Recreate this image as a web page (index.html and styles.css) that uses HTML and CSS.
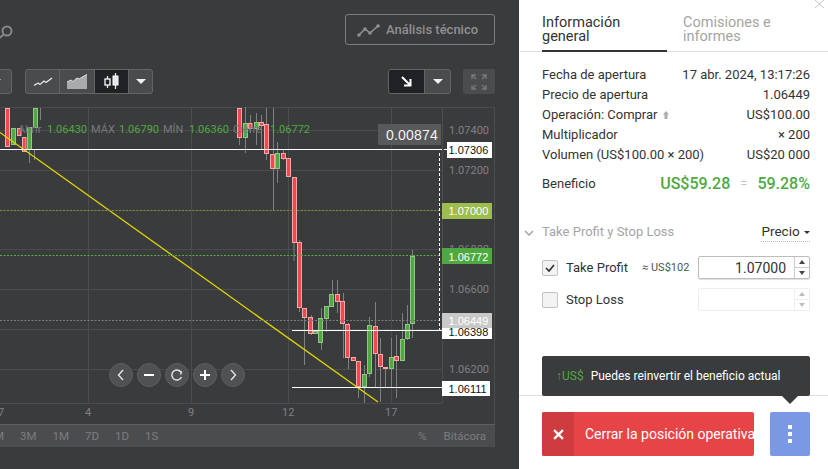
FILE: index.html
```html
<!DOCTYPE html>
<html lang="es">
<head>
<meta charset="utf-8">
<title>Posición operativa</title>
<link rel="stylesheet" href="styles.css">
</head>
<body>
<main class="terminal">
  <section class="chart-area">
    <header class="top-bar">
      <svg class="search-icon" viewBox="0 0 16 14" width="16" height="14"><circle cx="8" cy="6" r="4.5"/><path d="M4.8 9.2 0.5 13"/></svg>
      <button class="analysis-btn">
        <svg viewBox="0 0 24 14" width="24" height="14"><path d="M2 12 8 6 13 10 22 2"/><circle cx="2" cy="12" r="1.8"/><circle cx="8" cy="6" r="1.8"/><circle cx="13" cy="10" r="1.8"/><circle cx="21" cy="3" r="1.8"/></svg>
        <span>Análisis técnico</span>
      </button>
    </header>
    <div class="tool-bar">
      <div class="seg seg-cut"><span class="caret-cell"><i class="caret"></i></span></div>
      <div class="seg seg-types">
        <span class="cell c34"><svg viewBox="0 0 20 10" width="20" height="10"><path class="ic-line" d="M1 8.5 5 6 7 7.5 11 4 13 5.5 19 1"/></svg></span>
        <span class="cell c35"><svg viewBox="0 0 20 15" width="20" height="15"><path class="ic-area" d="M0 15V8L4 6 6 7.500 10 4 12 5 18 1 20 .5V15Z"/><path class="ic-areatop" d="M0 8 4 6 6 7.500 10 4 12 5 20 .5"/></svg></span>
        <span class="cell c33 on"><svg viewBox="0 0 16 18" width="16" height="18"><path class="ic-line" d="M3.500 3V15M11.500 0V16"/><rect class="ic-hollow" x="1" y="6" width="5" height="6"/><rect class="ic-solid" x="9" y="3" width="5" height="9"/></svg></span>
        <span class="caret-cell c26"><i class="caret"></i></span>
      </div>
      <div class="seg seg-trend">
        <span class="cell c36 on"><svg viewBox="0 0 12 12" width="12" height="12"><path class="ic-arrow" d="M1 1 9 9M3 9.500H9.500V3"/></svg></span>
        <span class="caret-cell c26"><i class="caret"></i></span>
      </div>
      <span class="expand-btn"><svg viewBox="0 0 16 16" width="16" height="16"><path d="M1 5V1H5M11 1H15V5M15 11V15H11M5 15H1V11M1 1 5 5M15 1 11 5M15 15 11 11M1 15 5 11"/></svg></span>
    </div>
    <svg class="plot" viewBox="0 107 519 317" width="519" height="317">
      <g class="grid">
        <path d="M0 107.500H495M0 130.500H442M0 170.500H442M0 210.500H442M0 249.500H442M0 289.500H442M0 329.500H442M0 369.500H442M0 403.500H442"/>
        <path d="M88.500 107V403M191.500 107V403M288.500 107V403M391.500 107V403M442.500 107V403M494.500 107V424"/>
      </g>
      <g class="wicks">
        <path d="M40.500 108V120M29.500 150V163M34.500 150V160M239.500 108V145M245.500 107V153M250.500 115V133M256.500 113V145M261.500 115V150M266.500 108V160M273.500 108V211M277.500 142V183M283.500 150V160M294 177V261M299.500 240V312M304.500 318V365M311.500 315V335M321.500 308V350M326.500 308V332M332.500 280V307M337.500 280V313M343.500 293V358M348.500 323V369M358.500 361V398M364.500 365V403M369.500 317V377M375.500 302V387M380.500 338V402M385.500 367V387M391.500 338V387M396.500 335V398M402.500 313V361M407.500 305V340M412.500 250V338"/>
      </g>
      <g class="dn">
        <rect x="5.500" y="108.500" width="4" height="38"/>
        <rect x="17.500" y="128.500" width="3.500" height="7"/>
        <rect x="22.500" y="137.500" width="3.500" height="14"/>
        <rect x="237.500" y="108.500" width="4" height="29"/>
        <rect x="248.500" y="123.500" width="3.500" height="5"/>
        <rect x="259.500" y="122.500" width="4" height="3"/>
        <rect x="264.500" y="124.500" width="4" height="29"/>
        <rect x="270.500" y="154.500" width="4" height="14"/>
        <rect x="281.500" y="153.500" width="4" height="5"/>
        <rect x="286.500" y="158.500" width="4" height="18"/>
        <rect x="292.500" y="177.500" width="4" height="65"/>
        <rect x="297.500" y="242.500" width="4" height="65"/>
        <rect x="302.500" y="308.500" width="4" height="9"/>
        <rect x="308.500" y="317.500" width="4" height="16"/>
        <rect x="335.500" y="294.500" width="4" height="7"/>
        <rect x="340.500" y="301.500" width="4" height="22"/>
        <rect x="345.500" y="324.500" width="4" height="33"/>
        <rect x="351.500" y="357.500" width="4" height="3"/>
        <rect x="356.500" y="361.500" width="4" height="25"/>
        <rect x="373.500" y="326.500" width="4" height="27"/>
        <rect x="378.500" y="354.500" width="4" height="12"/>
        <rect x="383.500" y="367.500" width="4" height="1"/>
        <rect x="394.500" y="356.500" width="4" height="4"/>
      </g>
      <g class="up">
        <rect x="11.500" y="128.500" width="4" height="16"/>
        <rect x="27.500" y="127.500" width="4" height="22"/>
        <rect x="33.500" y="108.500" width="4" height="19"/>
        <rect x="243.500" y="123.500" width="4" height="14"/>
        <rect x="254.500" y="122.500" width="4" height="6"/>
        <rect x="275.500" y="153.500" width="4" height="15"/>
        <rect x="313.500" y="331.500" width="4" height="2"/>
        <rect x="318.500" y="318.500" width="4" height="24"/>
        <rect x="324.500" y="306.500" width="4" height="12"/>
        <rect x="329.500" y="294.500" width="4" height="12"/>
        <rect x="362.500" y="374.500" width="4" height="12"/>
        <rect x="367.500" y="325.500" width="4" height="48"/>
        <rect x="389.500" y="357.500" width="4" height="11"/>
        <rect x="400.500" y="339.500" width="4" height="21"/>
        <rect x="405.500" y="324.500" width="4" height="14"/>
        <rect x="410.500" y="256.500" width="4" height="67"/>
      </g>
      <path class="trend" d="M0 132.500 378 402"/>
      <path class="dot-olive" d="M0 210.500H439"/>
      <path class="dot-green" d="M0 255.500H439"/>
      <path class="dot-grey" d="M0 320.500H439"/>
      <path class="dash-white" d="M439.500 153V330"/>
      <path class="solid-white" d="M0 149.500H442M292 330.500H442M292 387.500H442M444 149.500H447M444 210.500H447M444 255.500H447M444 387.500H447"/>
      <text class="ohlc" y="133"><tspan class="lbl" x="18">Abrir</tspan><tspan class="val" x="47">1.06430</tspan><tspan class="lbl" x="91">MÁX</tspan><tspan class="val" x="119">1.06790</tspan><tspan class="lbl" x="163">MÍN</tspan><tspan class="val" x="189">1.06360</tspan><tspan class="lbl" x="233">Cierre</tspan><tspan class="val" x="270">1.06772</tspan></text>
      <text class="axis" x="449" y="134">1.07400</text>
      <text class="axis" x="449" y="174">1.07200</text>
      <text class="axis" x="449" y="253">1.06800</text>
      <text class="axis" x="449" y="293">1.06600</text>
      <text class="axis" x="449" y="373">1.06200</text>
      <rect class="box-delta" x="378" y="124" width="63" height="21"/>
      <text class="delta" x="386" y="140">0.00874</text>
      <rect class="box-white" x="447" y="142" width="45" height="16"/><text class="tag dark" x="448.500" y="154">1.07306</text>
      <rect class="box-lime" x="442" y="203" width="50" height="16"/><text class="tag light" x="448.500" y="215">1.07000</text>
      <rect class="box-green" x="442" y="248" width="50" height="16"/><text class="tag light" x="448.500" y="261">1.06772</text>
      <rect class="box-white" x="442" y="325" width="50" height="14"/><text class="tag dark" x="448.500" y="336">1.06398</text>
      <rect class="box-grey" x="442" y="313" width="50" height="15"/><text class="tag light" x="448.500" y="325">1.06449</text>
      <rect class="box-white" x="442" y="381" width="48" height="15"/><text class="tag dark" x="448.500" y="393">1.06111</text>
      <text class="axis" x="-2" y="416">7</text>
      <text class="axis" x="85" y="416">4</text>
      <text class="axis" x="188" y="416">9</text>
      <text class="axis" x="282" y="416">12</text>
      <text class="axis" x="385" y="416">17</text>
    </svg>
    <nav class="zoom-nav">
      <span class="round"><svg viewBox="0 0 12 12" width="12" height="12"><path d="M8 1 3.500 6 8 11"/></svg></span>
      <span class="round"><svg viewBox="0 0 12 12" width="12" height="12"><path class="thick" d="M1 6H11"/></svg></span>
      <span class="round"><svg viewBox="0 0 12 12" width="12" height="12"><path d="M10 3.200A5 5 0 1 0 10.500 8M7.500 1.500 10.500 3 9.500 5.500" /></svg></span>
      <span class="round"><svg viewBox="0 0 12 12" width="12" height="12"><path class="thick" d="M1 6H11M6 1V11"/></svg></span>
      <span class="round"><svg viewBox="0 0 12 12" width="12" height="12"><path d="M4 1 8.500 6 4 11"/></svg></span>
    </nav>
    <div class="range-bar">
      <div class="ranges"><span class="cut">M</span><span>3M</span><span>1M</span><span>7D</span><span>1D</span><span>1S</span></div>
      <div class="range-tools"><span>%</span><span>Bitácora</span></div>
    </div>
  </section>

  <aside class="panel">
    <svg class="close" viewBox="0 0 10 9" width="10" height="9"><path d="M0 0 9 8M9 0 0 8"/></svg>
    <div class="tabs">
      <div class="tab active">Información<br>general</div>
      <div class="tab">Comisiones e<br>informes</div>
    </div>
    <dl class="info">
      <div class="row"><dt>Fecha de apertura</dt><dd>17 abr. 2024, 13:17:26</dd></div>
      <div class="row"><dt>Precio de apertura</dt><dd>1.06449</dd></div>
      <div class="row"><dt>Operación: Comprar <svg class="up-mini" viewBox="0 0 6 8" width="6" height="8"><path d="M3 0 6 3.500H4.500V8H1.500V3.500H0Z"/></svg></dt><dd>US$100.00</dd></div>
      <div class="row"><dt>Multiplicador</dt><dd>× 200</dd></div>
      <div class="row"><dt>Volumen (US$100.00 × 200)</dt><dd>US$20 000</dd></div>
    </dl>
    <div class="profit">
      <span>Beneficio</span>
      <div class="profit-values"><b>US$59.28</b><em>=</em><b>59.28%</b></div>
    </div>
    <div class="tp-head">
      <div class="tp-title"><svg viewBox="0 0 10 6" width="10" height="6"><path d="M1 1 5 5 9 1"/></svg><span>Take Profit y Stop Loss</span></div>
      <span class="mode">Precio <i class="mini-caret"></i></span>
    </div>
    <div class="tp-row">
      <span class="check"><svg viewBox="0 0 10 8" width="10" height="8"><path d="M1 4 4 7 9 1"/></svg></span>
      <span class="tp-label">Take Profit</span>
      <span class="approx">≈ US$102</span>
      <div class="field"><span class="field-val">1.07000</span><span class="spin"><i class="sp-up"></i><i class="sp-down"></i></span></div>
    </div>
    <div class="tp-row sl">
      <span class="check"></span>
      <span class="tp-label">Stop Loss</span>
      <div class="field off"><span class="field-val"></span><span class="spin"><i class="sp-up"></i><i class="sp-down"></i></span></div>
    </div>
    <footer class="actions">
      <div class="tip"><span class="tip-mark">↑US$</span><span>Puedes reinvertir el beneficio actual</span></div>
      <button class="close-pos"><span class="x-part"><svg viewBox="0 0 10 10" width="11" height="11"><path d="M1 1 9 9M9 1 1 9"/></svg></span><span class="close-text">Cerrar la posición operativa</span></button>
      <button class="more"><i></i><i></i><i></i></button>
    </footer>
  </aside>
</main>
</body>
</html>
```

FILE: styles.css
```css
* { box-sizing: border-box; }
html, body { margin: 0; height: 100%; overflow: hidden; }
body { font-family: Roboto, "Liberation Sans", sans-serif; background: #fff; }
.terminal { display: flex; width: 828px; height: 469px; }

/* chart column */
.chart-area { position: relative; width: 519px; flex: none; height: 469px; background: #3a3b3d; overflow: hidden; }
.top-bar { height: 69px; display: flex; justify-content: space-between; align-items: flex-start; padding: 14px 24px 0 0; }
.search-icon { margin: 11px 0 0 -1px; fill: none; stroke: #85868a; stroke-width: 2; }
.analysis-btn { width: 150px; height: 31px; display: flex; align-items: center; gap: 5px; padding: 0 0 0 11px; background: none; border: 1px solid #7b7c7e; border-radius: 3px; color: #8f9092; font: 500 13px Roboto, sans-serif; }
.analysis-btn path { fill: none; stroke: #8f9092; stroke-width: 1.600; }
.analysis-btn circle { fill: #8f9092; }

.tool-bar { height: 25px; display: flex; margin-bottom: 13px; }
.seg { display: flex; height: 25px; border: 1px solid #636466; border-radius: 3px; overflow: hidden; }
.seg-cut { width: 32px; margin-left: -20px; justify-content: flex-end; background: #4a4b4d; }
.seg-types { width: 128px; margin-left: 13px; background: #4a4b4d; }
.seg-trend { width: 63px; margin-left: 235px; background: #4a4b4d; }
.cell { display: flex; align-items: center; justify-content: center; height: 100%; border-right: 1px solid #636466; }
.c34 { width: 34px; } .c35 { width: 35px; } .c33 { width: 34px; } .c36 { width: 36px; }
.cell.on { background: #202124; }
.caret-cell { display: flex; align-items: center; justify-content: center; flex: 1; }
.caret { width: 0; height: 0; border-left: 5px solid transparent; border-right: 5px solid transparent; border-top: 5px solid #f0f0f0; }
.ic-line { fill: none; stroke: #e8e8e8; stroke-width: 1.300; }
.ic-area { fill: #a9aaab; }
.ic-areatop { fill: none; stroke: #e0e0e0; stroke-width: 1; }
.ic-hollow { fill: #202124; stroke: #fff; stroke-width: 1.300; }
.ic-solid { fill: #e8e8e8; stroke: #fff; }
.ic-arrow { fill: none; stroke: #fff; stroke-width: 2; }
.expand-btn { width: 32px; height: 25px; margin-left: 12px; display: flex; align-items: center; justify-content: center; background: #4b4c4e; border-radius: 2px; }
.expand-btn path { fill: none; stroke: #77787a; stroke-width: 1.300; }

/* plot */
.plot { display: block; }
.grid path { fill: none; stroke: #4b4c4e; stroke-width: 1; }
.wicks path { fill: none; stroke: #808183; stroke-width: 1; }
.dn rect { fill: #f4474d; stroke: #f7a8ab; stroke-width: 1; }
.up rect { fill: #4ea93f; stroke: #93c58b; stroke-width: 1; }
.trend { fill: none; stroke: #e0d400; stroke-width: 1.300; }
.dot-olive, .dot-green, .dot-grey { fill: none; stroke-width: 1; stroke-dasharray: 2 1.500; }
.dot-olive { stroke: #7e8f35; }
.dot-green { stroke: #57ad45; }
.dot-grey { stroke: #7d7e80; }
.dash-white { fill: none; stroke: #fff; stroke-width: 1; stroke-dasharray: 3 2; }
.solid-white { fill: none; stroke: #fff; stroke-width: 1; }
.ohlc { font: 11px Roboto, sans-serif; }
.lbl { fill: #77787a; }
.val { fill: #4ea93f; }
.axis { font: 11px Roboto, sans-serif; fill: #808183; }
.box-delta { fill: #58595b; }
.delta { font: 14px "Liberation Sans", sans-serif; fill: #f4f4f4; letter-spacing: .2px; }
.box-white { fill: #fff; }
.box-lime { fill: #9dbd4c; }
.box-green { fill: #4ea93f; }
.box-grey { fill: #c9c9c9; }
.tag { font: 11px "Liberation Sans", sans-serif; }
.tag.dark { fill: #111; }
.tag.light { fill: #fff; }

.zoom-nav { position: absolute; left: 109px; top: 363px; display: flex; gap: 4px; }
.round { width: 24px; height: 24px; border-radius: 50%; background: #505153; border: 1px solid #5d5e60; display: flex; align-items: center; justify-content: center; }
.round path { fill: none; stroke: #e6e6e6; stroke-width: 1.400; }
.round path.thick { stroke: #fff; stroke-width: 2; }

.range-bar { width: 495px; height: 23px; display: flex; justify-content: space-between; align-items: center; background: #4b4c4e; border-top: 1px solid #5e5f61; color: #7c7d7f; font-size: 11.500px; padding-right: 9px; }
.ranges { display: flex; gap: 16px; margin-left: -6px; }
.range-tools { display: flex; gap: 17px; }

/* side panel */
.panel { position: relative; flex: 1; height: 469px; display: flex; flex-direction: column; background: #fff; color: #333; font-size: 13px; }
.close { position: absolute; right: 3px; top: 0; fill: none; stroke: #b5b5b5; stroke-width: .8; }
.tabs { display: flex; height: 52px; padding: 16px 0 0 23px; border-bottom: 1px solid #ddd; margin-left: 1px; font-size: 14.500px; line-height: 14px; }
.tab { color: #a5a5a5; padding-top: 0; height: 36px; }
.tab.active { width: 125px; color: #333; border-bottom: 2px solid #333; margin-right: 16px; margin-left: -1px; }
.info { margin: 12px 18px 0 23px; }
.row { display: flex; justify-content: space-between; align-items: center; height: 20px; }
.row dt, .row dd { margin: 0; }
.up-mini { fill: #adadad; margin-left: 2px; }
.profit { margin: 7px 18px 0 23px; height: 24px; display: flex; justify-content: space-between; align-items: center; }
.profit-values { display: flex; align-items: center; gap: 10px; color: #4ea93f; font-size: 16px; }
.profit-values b { font-weight: 500; }
.profit-values em { font-style: normal; color: #c4c4c4; font-size: 13px; }
.tp-head { margin: 26px 18px 0 5px; height: 21px; display: flex; justify-content: space-between; align-items: center; }
.tp-title { display: flex; align-items: center; gap: 8px; color: #a5a5a5; }
.tp-title svg { fill: none; stroke: #a5a5a5; stroke-width: 1.500; margin-top: 2px; }
.mode { height: 21px; line-height: 20px; border-bottom: 1px dotted #bdbdbd; color: #333; font-size: 13.500px; }
.mini-caret { display: inline-block; width: 0; height: 0; margin-left: 1px; vertical-align: 2px; border-left: 3.500px solid transparent; border-right: 3.500px solid transparent; border-top: 3.500px solid #333; }
.tp-row { margin: 14px 18px 0 23px; height: 23px; display: flex; align-items: center; }
.tp-row.sl { margin-top: 9px; }
.check { width: 16px; height: 16px; flex: none; border: 1px solid #c4c4c4; border-radius: 2px; background: #f3f3f3; display: flex; align-items: center; justify-content: center; }
.check svg { fill: none; stroke: #333; stroke-width: 1.700; }
.tp-label { margin-left: 8px; }
.approx { margin-left: 14px; font-size: 11px; color: #555; }
.field { margin-left: auto; width: 112px; height: 23px; display: flex; border: 1px solid #bdbdbd; border-radius: 2px; box-shadow: 0 1px 1px #ddd; font-size: 14px; }
.field-val { flex: 1; text-align: right; padding-right: 8px; line-height: 22px; }
.spin { width: 15px; display: flex; flex-direction: column; border-left: 1px solid #ccc; }
.spin i { flex: 1; display: flex; align-items: center; justify-content: center; }
.spin i::after { content: ""; width: 0; height: 0; border-left: 3px solid transparent; border-right: 3px solid transparent; }
.sp-up { border-bottom: 1px solid #ccc; }
.sp-up::after { border-bottom: 4px solid #444; }
.sp-down::after { border-top: 4px solid #444; }
.field.off { border-color: #eee; box-shadow: none; }
.field.off .spin { border-left-color: #eee; }
.field.off .sp-up { border-bottom-color: #eee; }
.field.off .sp-up::after { border-bottom-color: #bbb; }
.field.off .sp-down::after { border-top-color: #bbb; }

.actions { position: relative; margin-top: auto; height: 74px; padding: 16px 18px 0 23px; border-top: 1px solid #ddd; display: flex; justify-content: space-between; margin-left: 0; }
.tip { position: absolute; left: 23px; top: -40px; width: 268px; height: 40px; padding-left: 14px; display: flex; align-items: center; gap: 7px; background: #3a3b3d; border-radius: 2px; color: #fff; font-size: 12px; }
.tip::after { content: ""; position: absolute; left: 240px; top: 40px; border-left: 8px solid transparent; border-right: 8px solid transparent; border-top: 8px solid #3a3b3d; }
.tip-mark { color: #4ea93f; }
.close-pos { width: 212px; height: 44px; display: flex; padding: 0; border: 0; border-radius: 2px; background: #e74448; color: #fff; font: 14px Roboto, sans-serif; overflow: hidden; }
.x-part { width: 32px; height: 44px; flex: none; display: flex; align-items: center; justify-content: center; background: #cf3c40; }
.x-part path { fill: none; stroke: #fff; stroke-width: 2; }
.close-text { margin-left: 11px; line-height: 44px; white-space: nowrap; }
.more { width: 40px; height: 44px; padding: 0; border: 0; border-radius: 2px; background: #7b98e5; display: flex; flex-direction: column; align-items: center; justify-content: center; gap: 3px; }
.more i { width: 4px; height: 4px; background: #fff; }
```
